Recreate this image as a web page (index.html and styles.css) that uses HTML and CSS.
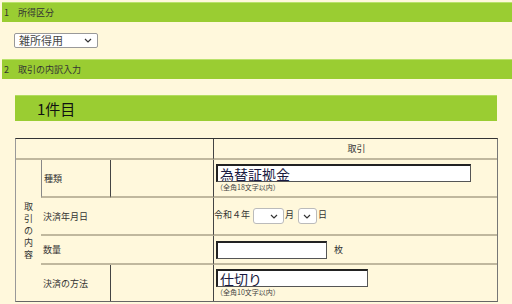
FILE: index.html
```html
<!DOCTYPE html>
<html lang="ja">
<head>
    <meta charset="UTF-8">
    <title>取引の内訳入力</title>
    <link rel="stylesheet" href="styles.css">
</head>
<body>
    <div class="sec-bar"><span class="sec-no">1</span>所得区分</div>
    <div class="sec-body">
        <select class="kubun">
            <option>雑所得用</option>
        </select>
    </div>
    <div class="sec-bar"><span class="sec-no">2</span>取引の内訳入力</div>

    <div class="item-title">1件目</div>

    <table class="detail">
        <tr class="head">
            <td colspan="3"></td>
            <td class="center">取引</td>
        </tr>
        <tr class="r1">
            <td rowspan="4" class="vert">取<br>引<br>の<br>内<br>容</td>
            <td class="label">種類</td>
            <td class="blank"></td>
            <td>
                <input type="text" class="txt wide" value="為替証拠金">
                <div class="note">（全角18文字以内）</div>
            </td>
        </tr>
        <tr class="r2">
            <td class="label" colspan="2">決済年月日</td>
            <td class="date">令和４年<select class="sel-m"><option></option></select>月<select class="sel-d"><option></option></select>日</td>
        </tr>
        <tr class="r3">
            <td class="label" colspan="2">数量</td>
            <td><input type="text" class="txt qty"><span class="unit">枚</span></td>
        </tr>
        <tr class="r4">
            <td class="label">決済の方法</td>
            <td class="blank"></td>
            <td>
                <input type="text" class="txt mid" value="仕切り">
                <div class="note">（全角10文字以内）</div>
            </td>
        </tr>
    </table>
</body>
</html>
```

FILE: styles.css
```css
body {
    margin: 0;
    background-color: #fff8dc;
    font-family: "Noto Sans CJK JP", "DejaVu Sans", sans-serif;
    color: #333;
}
.sec-bar {
    margin: 2px 0 0 2px;
    height: 19px;
    line-height: 19px;
    background-color: #9acd32;
    border-top: 1px solid #b9e26b;
    font-size: 9px;
    padding-left: 2px;
}
.sec-no {
    display: inline-block;
    width: 14px;
}
.sec-body {
    padding: 11px 0 9px 14px;
    height: 15px;
}
select {
    appearance: none;
    -webkit-appearance: none;
    background-color: #fff;
    background-image: url("data:image/svg+xml,%3Csvg xmlns='http://www.w3.org/2000/svg' width='8' height='5' viewBox='0 0 8 5'%3E%3Cpath d='M1 1l3 3 3-3' fill='none' stroke='%23333' stroke-width='1.2'/%3E%3C/svg%3E");
    background-repeat: no-repeat;
    font-family: inherit;
    color: #444;
}
.kubun {
    width: 84px;
    height: 15px;
    padding: 0 0 0 4px;
    font-size: 11px;
    line-height: 13px;
    border: 1px solid #999;
    border-radius: 2px;
    background-position: right 5px center;
    display: block;
}
.item-title {
    margin: 16px 15px 0 15px;
    height: 25px;
    line-height: 25px;
    background-color: #9acd32;
    border-top: 1px solid #b2dc5e;
    font-size: 15px;
    color: #111;
    padding-left: 22px;
}
.detail {
    margin: 17px 0 0 15px;
    width: 483px;
    border-collapse: separate;
    border-spacing: 0;
    border-top: 1px solid #333;
    border-right: 1px solid #777;
    border-left: 1px solid #999;
    border-bottom: 1px solid #666;
    font-size: 9px;
}
.detail td {
    padding: 0 0 0 2px;
    border-bottom: 2px solid #c0b89e;
    border-left: 1px solid #444;
    vertical-align: middle;
}
.detail tr td:first-child {
    border-left: none;
}
.detail tr.r4 td,
.detail td.vert {
    border-bottom: none;
}
.detail td.vert {
    width: 25px;
    text-align: center;
    padding: 0;
    line-height: 12px;
}
.detail td.label {
    border-left: 1px solid #888;
}
.head td {
    height: 19px;
}
.center {
    text-align: center;
}
.r1 td { height: 36px; }
.r2 td { height: 36px; }
.r3 td { height: 27px; }
.r4 td { height: 36px; }
.label {
    width: 66px;
}
.blank {
    width: 100px;
}
.txt {
    display: block;
    height: 18px;
    padding: 0 2px;
    box-sizing: border-box;
    font-family: inherit;
    font-size: 14px;
    line-height: 14px;
    color: #1a1a40;
    background: #fff;
    border: 1px solid #555;
    border-top: 2px solid #222;
    border-left: 2px solid #222;
    margin: 0;
}
.wide { width: 255px; }
.mid { width: 152px; }
.qty {
    width: 111px;
    display: inline-block;
    vertical-align: middle;
}
.unit {
    margin-left: 7px;
    vertical-align: middle;
}
.note {
    font-size: 7px;
    line-height: 9px;
    margin-top: 1px;
    color: #444;
}
.date {
    padding-left: 0 !important;
}
.date select {
    height: 16px;
    vertical-align: middle;
    border: 1px solid #bbb;
    border-radius: 3px;
    margin: 0 1px 0 3px;
    font-size: 9px;
    padding: 0;
    background-position: right 5px center;
}
.sel-m { width: 31px; }
.sel-d { width: 19px; margin-left: 4px !important; }
```
